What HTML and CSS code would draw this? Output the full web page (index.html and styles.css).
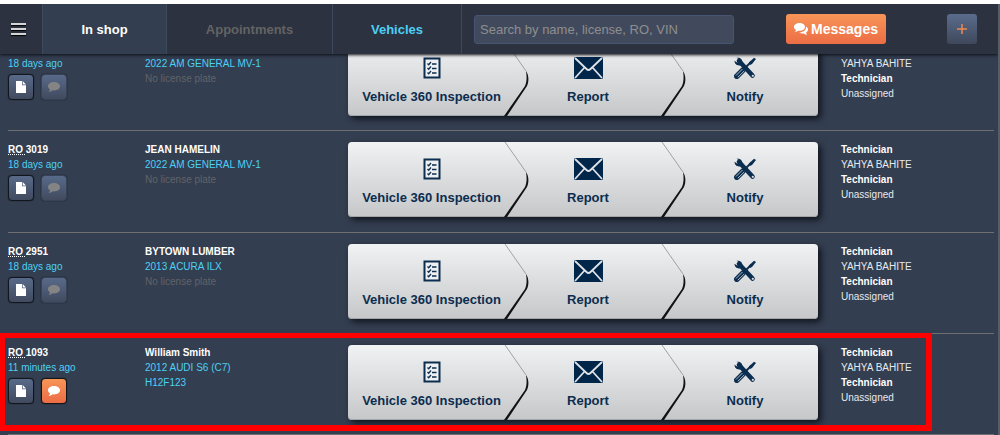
FILE: index.html
```html
<!DOCTYPE html>
<html lang="en">
<head>
<meta charset="utf-8">
<meta name="viewport" content="width=device-width, initial-scale=1">
<title>In shop</title>
<link rel="stylesheet" href="styles.css">
</head>
<body>
<svg class="sprite" aria-hidden="true">
  <symbol id="file" viewBox="0 0 10 12"><path d="M0 0H6V4.200H10V12H0ZM6.700 0L10 3.500H6.700Z"/></symbol>
  <symbol id="bubble" viewBox="0 0 12 10"><path d="M6 0C9.400 0 12 1.900 12 4.200S9.400 8.400 6 8.400C5.500 8.400 5 8.400 4.500 8.300C3.400 9.300 2 9.900.6 10C1.400 9.200 1.900 8.300 2 7.300C.8 6.600 0 5.500 0 4.200C0 1.900 2.600 0 6 0Z"/></symbol>
  <symbol id="bubbles" viewBox="0 0 14 12"><path d="M5.500 0C8.500 0 11 1.700 11 3.900S8.500 7.800 5.500 7.800L4.300 7.700C3.400 8.400 2.300 8.900 1 9C1.600 8.400 1.900 7.700 2 7C.8 6.300 0 5.200 0 3.900C0 1.700 2.500 0 5.500 0Z"/><path d="M12 3.500C13.200 4.100 14 5.200 14 6.500C14 7.900 13.200 9 12 9.700C12.100 10.400 12.500 11.100 13.100 11.700C11.900 11.700 10.700 11.200 9.700 10.400C7.900 10.700 6.200 10.300 5 9.500C8.900 9.500 12.300 7.200 12 3.500Z"/></symbol>
  <symbol id="checklist" viewBox="0 0 18 22"><rect x="1.500" y="1.500" width="15" height="19" fill="#eef0f2" stroke="#0b2d4f" stroke-width="2"/><g fill="none" stroke="#0b2d4f" stroke-width="1.300"><path d="M4.500 6.500L5.700 7.700L8 5M4.500 11L5.700 12.200L8 9.500M4.500 15.500L5.700 16.700L8 14"/><path d="M9 7H13.500M9 11.500H13.500M9 16H13.500"/></g></symbol>
  <symbol id="envelope" viewBox="0 0 29 22"><rect width="29" height="22" rx="1.500" fill="#00264a"/><path d="M1 1L12.500 12Q14.500 14 16.500 12L28 1M1 21L10.500 10.500M28 21L18.500 10.500" fill="none" stroke="#dfe3e7" stroke-width="1.800"/></symbol>
  <symbol id="tools" viewBox="0 0 22 22"><path d="M5 4L18.500 18.500" fill="none" stroke="#0b2d4f" stroke-width="4.600" stroke-linecap="round"/><path d="M2.500.8C6 .2 8.600 2.400 8.400 5.500L6 8.400C3 9 .4 6.800.5 3.800L3.500 5.800L5.500 4.500L5.200 2.300Z" fill="#0b2d4f"/><path d="M11 11L17.500 4.500" stroke="#0b2d4f" stroke-width="2"/><path d="M15 5.500L20 .8L22 2L18 7L16 8Z" fill="#0b2d4f"/><path d="M2.800 19.200L8.800 13.200" stroke="#0b2d4f" stroke-width="5.600" stroke-linecap="round"/><path d="M2 18.500L8.500 12M3.800 20.200L10.200 14" stroke="#d5dade" stroke-width=".8"/><circle cx="18.800" cy="18.800" r="1.100" fill="#dfe3e7"/></symbol>
  <symbol id="chevron" viewBox="0 0 26 75"><path d="M1 0L22 30" fill="none" stroke="#8b8e91" stroke-width=".8"/><path d="M22 30C25 34 25 41 23 45L3 75H0L21 45C22.800 41 23 36 22 30Z" fill="#101214"/></symbol>
</svg>
<div class="app">
  <header class="topbar">
    <button class="menu" type="button" aria-label="Menu"><span></span><span></span><span></span></button>
    <nav class="tabs">
      <a class="tab tab-shop" href="#shop">In shop</a>
      <a class="tab tab-appointments" href="#appointments">Appointments</a>
      <a class="tab tab-vehicles" href="#vehicles">Vehicles</a>
    </nav>
    <input class="search" type="text" aria-label="Search" placeholder="Search by name, license, RO, VIN">
    <div class="actions">
      <button class="messages" type="button"><svg width="14" height="12"><use href="#bubbles"/></svg>Messages</button>
      <button class="add" type="button" aria-label="Add"><svg width="10" height="10" viewBox="0 0 10 10"><path d="M5 0V10M0 5H10" stroke="#f0894f" stroke-width="1.500"/></svg></button>
    </div>
  </header>
  <main class="orders">
    <article class="order">
      <div class="info">
        <strong><abbr title="Repair order">RO </abbr>3020</strong>
        <a href="#order">18 days ago</a>
        <div class="buttons">
          <button class="small" type="button" aria-label="Notes"><svg width="10" height="12"><use href="#file"/></svg></button>
          <button class="small" type="button" aria-label="Chat" disabled><svg width="12" height="10"><use href="#bubble"/></svg></button>
        </div>
      </div>
      <div class="info">
        <strong>JEAN HAMELIN</strong>
        <a href="#vehicle">2022 AM GENERAL MV-1</a>
        <span class="muted">No license plate</span>
      </div>
      <div class="steps">
        <button class="step" type="button"><svg width="18" height="22"><use href="#checklist"/></svg>Vehicle 360 Inspection</button>
        <svg class="chevron" width="26" height="75"><use href="#chevron"/></svg>
        <button class="step" type="button"><svg width="29" height="22"><use href="#envelope"/></svg>Report</button>
        <svg class="chevron" width="26" height="75"><use href="#chevron"/></svg>
        <button class="step" type="button"><svg width="22" height="22"><use href="#tools"/></svg>Notify</button>
      </div>
      <div class="info staff"><strong>Technician</strong><span>YAHYA BAHITE</span><strong>Technician</strong><span>Unassigned</span></div>
    </article>
    <article class="order">
      <div class="info">
        <strong><abbr title="Repair order">RO </abbr>3019</strong>
        <a href="#order">18 days ago</a>
        <div class="buttons">
          <button class="small" type="button" aria-label="Notes"><svg width="10" height="12"><use href="#file"/></svg></button>
          <button class="small" type="button" aria-label="Chat" disabled><svg width="12" height="10"><use href="#bubble"/></svg></button>
        </div>
      </div>
      <div class="info">
        <strong>JEAN HAMELIN</strong>
        <a href="#vehicle">2022 AM GENERAL MV-1</a>
        <span class="muted">No license plate</span>
      </div>
      <div class="steps">
        <button class="step" type="button"><svg width="18" height="22"><use href="#checklist"/></svg>Vehicle 360 Inspection</button>
        <svg class="chevron" width="26" height="75"><use href="#chevron"/></svg>
        <button class="step" type="button"><svg width="29" height="22"><use href="#envelope"/></svg>Report</button>
        <svg class="chevron" width="26" height="75"><use href="#chevron"/></svg>
        <button class="step" type="button"><svg width="22" height="22"><use href="#tools"/></svg>Notify</button>
      </div>
      <div class="info staff"><strong>Technician</strong><span>YAHYA BAHITE</span><strong>Technician</strong><span>Unassigned</span></div>
    </article>
    <article class="order">
      <div class="info">
        <strong><abbr title="Repair order">RO </abbr>2951</strong>
        <a href="#order">18 days ago</a>
        <div class="buttons">
          <button class="small" type="button" aria-label="Notes"><svg width="10" height="12"><use href="#file"/></svg></button>
          <button class="small" type="button" aria-label="Chat" disabled><svg width="12" height="10"><use href="#bubble"/></svg></button>
        </div>
      </div>
      <div class="info">
        <strong>BYTOWN LUMBER</strong>
        <a href="#vehicle">2013 ACURA ILX</a>
        <span class="muted">No license plate</span>
      </div>
      <div class="steps">
        <button class="step" type="button"><svg width="18" height="22"><use href="#checklist"/></svg>Vehicle 360 Inspection</button>
        <svg class="chevron" width="26" height="75"><use href="#chevron"/></svg>
        <button class="step" type="button"><svg width="29" height="22"><use href="#envelope"/></svg>Report</button>
        <svg class="chevron" width="26" height="75"><use href="#chevron"/></svg>
        <button class="step" type="button"><svg width="22" height="22"><use href="#tools"/></svg>Notify</button>
      </div>
      <div class="info staff"><strong>Technician</strong><span>YAHYA BAHITE</span><strong>Technician</strong><span>Unassigned</span></div>
    </article>
    <article class="order highlighted">
      <div class="info">
        <strong><abbr title="Repair order">RO </abbr>1093</strong>
        <a href="#order">11 minutes ago</a>
        <div class="buttons">
          <button class="small" type="button" aria-label="Notes"><svg width="10" height="12"><use href="#file"/></svg></button>
          <button class="small unread" type="button" aria-label="Chat"><svg width="12" height="10"><use href="#bubble"/></svg></button>
        </div>
      </div>
      <div class="info">
        <strong>William Smith</strong>
        <a href="#vehicle">2012 AUDI S6 (C7)</a>
        <a href="#plate">H12F123</a>
      </div>
      <div class="steps">
        <button class="step" type="button"><svg width="18" height="22"><use href="#checklist"/></svg>Vehicle 360 Inspection</button>
        <svg class="chevron" width="26" height="75"><use href="#chevron"/></svg>
        <button class="step" type="button"><svg width="29" height="22"><use href="#envelope"/></svg>Report</button>
        <svg class="chevron" width="26" height="75"><use href="#chevron"/></svg>
        <button class="step" type="button"><svg width="22" height="22"><use href="#tools"/></svg>Notify</button>
      </div>
      <div class="info staff"><strong>Technician</strong><span>YAHYA BAHITE</span><strong>Technician</strong><span>Unassigned</span></div>
    </article>
  </main>
</div>
</body>
</html>
```
FILE: styles.css
```css
* { box-sizing: border-box; }

body {
  margin: 0;
  padding-top: 4px;
  background: #fff;
  color: #fff;
  font-family: "Liberation Sans", Arial, sans-serif;
  font-size: 10px;
  line-height: 15px;
}

button, input { font: inherit; color: inherit; margin: 0; }
button { border: 0; padding: 0; background: none; cursor: pointer; }
a { color: #4dd0f5; text-decoration: none; }
svg { display: block; flex: none; fill: currentColor; }
.sprite { position: absolute; width: 0; height: 0; }

.app {
  display: flex;
  flex-direction: column;
  min-height: calc(100vh - 4px);
  background: #333e50;
  border-right: 2px solid #565d6a;
  overflow: hidden;
}

.topbar {
  position: relative;
  z-index: 1;
  display: flex;
  align-items: center;
  height: 50px;
  background: #2c323f;
  box-shadow: 0 1px 3px #0c0f14;
  font-size: 13px;
}

.menu {
  display: flex;
  flex-direction: column;
  align-items: center;
  justify-content: center;
  gap: 3px;
  width: 42px;
  height: 50px;
  padding-right: 5px;
}
.menu span { width: 15px; height: 2px; background: #d4d4d4; box-shadow: 0 1px 1px #000; }

.tabs { display: flex; height: 50px; border-left: 1px solid #3d4a5d; }
.tab {
  display: flex;
  align-items: center;
  justify-content: center;
  border-right: 1px solid #3d4a5d;
  font-weight: bold;
}
.tab-shop { width: 124px; background: #333e50; color: #fff; }
.tab-appointments { width: 166px; color: #636363; }
.tab-vehicles { width: 129px; }

.search {
  flex: 1;
  min-width: 120px;
  max-width: 260px;
  height: 29px;
  margin-left: 12px;
  padding: 0 5px;
  border: 1px solid #465571;
  border-radius: 3px;
  background: #414a5d;
  font-size: 13px;
}
.search::placeholder { color: #8e8e8e; opacity: 1; }

.actions { display: flex; gap: 61px; margin-left: auto; padding-right: 21px; }
.messages {
  display: flex;
  align-items: center;
  justify-content: center;
  gap: 3px;
  width: 100px;
  height: 30px;
  border-radius: 3px;
  background: linear-gradient(#f79558, #ec6d45);
  font-size: 14px;
  font-weight: bold;
}
.add {
  display: grid;
  place-items: center;
  width: 30px;
  height: 30px;
  border-radius: 3px;
  background: linear-gradient(#5a6c8c, #3f485b);
}

.orders {
  flex: 1;
  display: flex;
  flex-direction: column;
  margin-top: -24px;
  padding-right: 4px;
  padding-left: 8px;
}

.order {
  position: relative;
  flex: 1;
  display: grid;
  grid-template-columns: 137px 203px 470px 1fr;
  align-items: start;
  min-height: 101px;
  max-height: 102px;
  padding-top: 11px;
  border-bottom: 1px solid #6d6f71;
}

.highlighted::after {
  content: "";
  position: absolute;
  top: -1px;
  right: 62px;
  bottom: 3px;
  left: -8px;
  border: 5px solid #f00;
  border-right-width: 6px;
  border-bottom-width: 6px;
  pointer-events: none;
}

.info { display: flex; flex-direction: column; align-items: flex-start; }
.staff { padding-left: 23px; color: #e6e9ed; }
.staff strong { color: #fff; }
.muted { color: #626367; }
abbr { text-decoration: underline dotted 1px; text-underline-offset: 1px; white-space: pre; }

.buttons { display: flex; gap: 7px; padding-top: 3px; }
.small {
  display: grid;
  place-items: center;
  width: 26px;
  height: 26px;
  border: 1px solid #11151c;
  border-radius: 4px;
  background: linear-gradient(#586a8a, #414a5e);
  box-shadow: 0 0 1px #000;
}
.small:disabled { border-color: #394357; color: #848484; }
.unread { background: linear-gradient(#f79558, #ec6d45); }

.steps {
  display: grid;
  grid-template-columns: 156px 0 157px 0 157px;
  height: 75px;
  border-radius: 4px;
  background: linear-gradient(#f1f2f4, #c6c7c8);
  box-shadow: 3px 3px 6px #10151d, inset 0 -1px #a3a5a7;
}
.step {
  display: flex;
  flex-direction: column;
  align-items: center;
  gap: 10px;
  padding-top: 16px;
  padding-left: 11px;
  color: #0b2d4f;
  font-size: 13px;
  font-weight: bold;
  white-space: nowrap;
}
.chevron { pointer-events: none; }
```
